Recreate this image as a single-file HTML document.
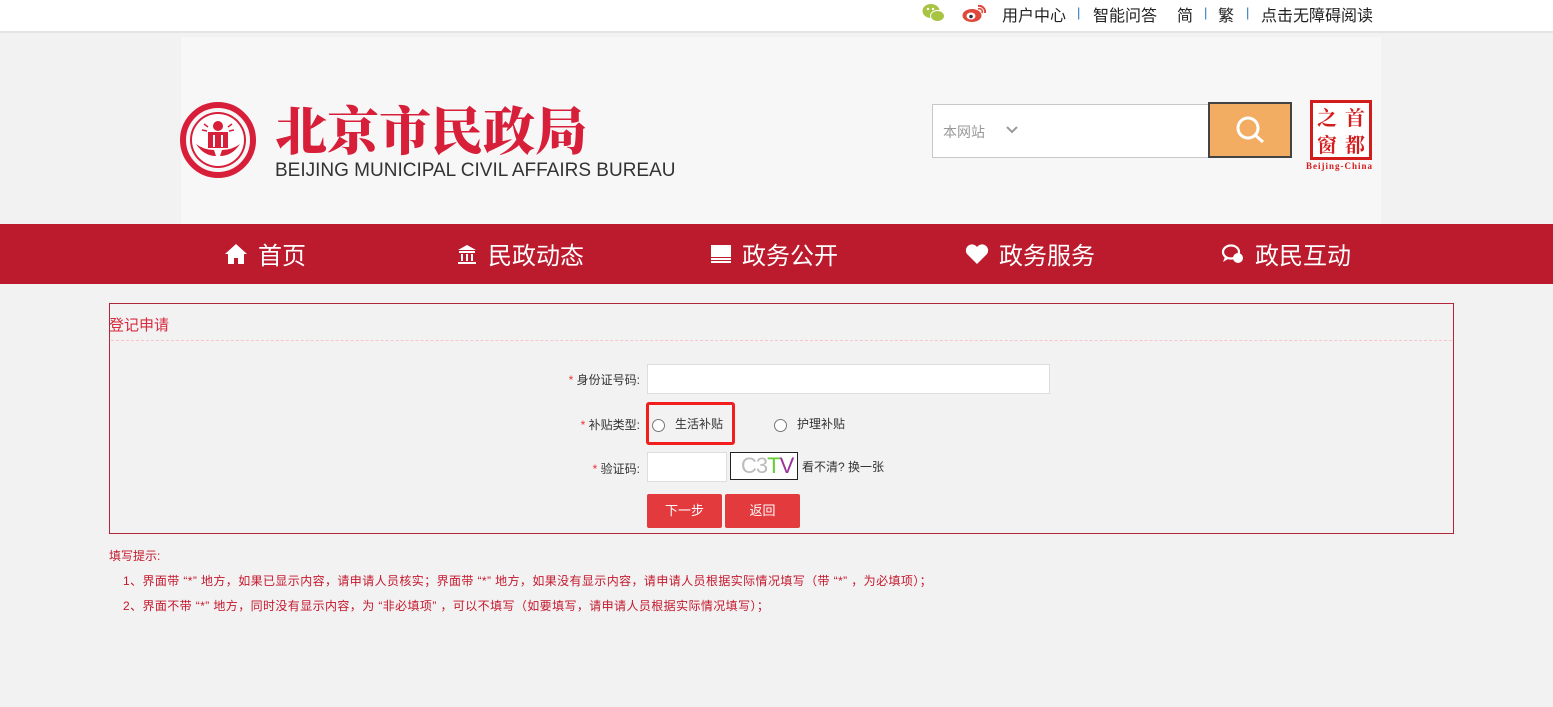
<!DOCTYPE html>
<html><head><meta charset="utf-8"><style>
*{margin:0;padding:0;box-sizing:border-box}
body{width:1553px;height:707px;background:#f2f2f2;font-family:"Liberation Sans","Noto Sans CJK SC",sans-serif;position:relative;overflow:hidden}
.abs{position:absolute}
.top{left:0;top:0;width:1553px;height:33px;background:#fff;border-bottom:2px solid #e4e4e4}
.top span{position:absolute;top:2px;font-size:16px;color:#222}
.sep{color:#2a7abf!important;font-size:13px!important;top:5px!important}
.hdr{left:181px;top:37px;width:1200px;height:187px;background:#f7f7f7}
.nav{left:0;top:224px;width:1553px;height:60px;background:#bc1a2d}
.nav .it{position:absolute;top:12px;color:#fff;font-size:24px;display:flex;align-items:center;gap:10px}
.box{left:109px;top:303px;width:1345px;height:231px;border:1px solid #b0273a}
.lbl{font-size:12px;color:#333;text-align:right}
.star{color:#e33}
.btn{background:#e33a3e;color:#fff;font-size:13px;text-align:center;line-height:34px;height:34px;border-radius:2px}
.tip{font-size:12px;color:#c4182d;letter-spacing:.4px}
</style></head><body>
<div class="abs top">
<svg class="abs" style="left:922px;top:3px" width="23" height="20" viewBox="0 0 23 20"><ellipse cx="9" cy="8" rx="8.5" ry="7" fill="#a8c443"/><ellipse cx="15.5" cy="13" rx="7" ry="5.5" fill="#a8c443" stroke="#fff" stroke-width="1"/><circle cx="6" cy="6" r="1.2" fill="#fff"/><circle cx="11" cy="6" r="1.2" fill="#fff"/></svg>
<svg class="abs" style="left:962px;top:3px" width="25" height="20" viewBox="0 0 25 20"><ellipse cx="10" cy="12.5" rx="9.5" ry="6.5" fill="#e0483e"/><ellipse cx="9" cy="13" rx="4.5" ry="3.5" fill="#fff"/><circle cx="9" cy="13.5" r="1.8" fill="#333"/><path d="M16 3a6 6 0 0 1 7 7" stroke="#e0483e" stroke-width="2" fill="none"/><path d="M16 6a3 3 0 0 1 4 4" stroke="#e0483e" stroke-width="1.6" fill="none"/></svg>
<span style="left:1002px">用户中心</span><span class="sep" style="left:1077px">|</span>
<span style="left:1093px">智能问答</span><span style="left:1177px">简</span><span class="sep" style="left:1204px">|</span>
<span style="left:1218px">繁</span><span class="sep" style="left:1246px">|</span><span style="left:1261px">点击无障碍阅读</span>
</div>
<div class="abs hdr"></div>
<svg class="abs" style="left:180px;top:102px" width="76" height="76" viewBox="0 0 76 76"><circle cx="38" cy="38" r="35" fill="none" stroke="#d81f3a" stroke-width="6"/><circle cx="38" cy="38" r="28" fill="#d81f3a"/><circle cx="38" cy="38" r="26" fill="#fff"/><circle cx="38" cy="24" r="5" fill="#d81f3a"/><rect x="28" y="30" width="20" height="16" fill="#d81f3a"/><rect x="33" y="33" width="2" height="12" fill="#fff"/><rect x="41" y="33" width="2" height="12" fill="#fff"/><path d="M16 42q8 12 20 12l-2-6q-10 0-18-6zM60 42q-8 12-20 12l2-6q10 0 18-6z" fill="#d81f3a"/><path d="M24 22l4 3M52 22l-4 3M22 28l5 1M54 28l-5 1" stroke="#d81f3a" stroke-width="1.5"/></svg>
<div class="abs" style="left:275px;top:98px;font-family:'Noto Serif CJK SC',serif;font-weight:900;font-size:52px;color:#d81f3a;line-height:60px">北京市民政局</div>
<div class="abs" style="left:275px;top:161px;font-size:19px;color:#333;line-height:20px">BEIJING MUNICIPAL CIVIL AFFAIRS BUREAU</div>
<div class="abs" style="left:932px;top:104px;width:277px;height:54px;background:#fff;border:1px solid #c8c8c8"></div>
<div class="abs" style="left:943px;top:122px;font-size:14px;color:#999">本网站</div>
<svg class="abs" style="left:1006px;top:126px" width="12" height="8"><path d="M1 1l5 5 5-5" stroke="#999" stroke-width="2" fill="none"/></svg>
<div class="abs" style="left:1208px;top:102px;width:84px;height:56px;background:#f2ad63;border:2px solid #444"></div>
<svg class="abs" style="left:1235px;top:115px" width="32" height="32"><circle cx="13" cy="13" r="10" stroke="#fff" stroke-width="3" fill="none"/><path d="M20 20l8 7" stroke="#fff" stroke-width="3"/></svg>
<div class="abs" style="left:1310px;top:100px;width:62px;height:60px;border:3px solid #d31d1d;background:#fff;font-family:'Noto Serif CJK SC',serif;color:#d31d1d;font-size:20px;font-weight:bold;line-height:27px;text-align:center"><div style="display:grid;grid-template-columns:1fr 1fr"><span>之</span><span>首</span><span>窗</span><span>都</span></div></div>
<div class="abs" style="left:1306px;top:161px;font-family:'Liberation Serif',serif;font-size:9px;font-weight:bold;color:#d31d1d;letter-spacing:1px">Beijing-China</div>
<div class="abs nav">
<div class="it" style="left:224px"><svg width="24" height="22" viewBox="0 0 24 22"><path d="M12 1L1 11h3v10h6v-6h4v6h6V11h3z" fill="#fff"/></svg>首页</div>
<div class="it" style="left:456px"><svg width="22" height="22" viewBox="0 0 22 22"><path d="M11 2L2 7h18zM3 8h16v2H3zM5 11h2v7H5zM10 11h2v7h-2zM15 11h2v7h-2zM2 19h18v2H2z" fill="#fff"/></svg>民政动态</div>
<div class="it" style="left:710px"><svg width="22" height="22" viewBox="0 0 22 22"><rect x="1" y="2" width="20" height="12" fill="#fff"/><rect x="1" y="15" width="20" height="2" fill="#fff"/><rect x="1" y="18" width="20" height="2" fill="#fff"/></svg>政务公开</div>
<div class="it" style="left:965px"><svg width="24" height="22" viewBox="0 0 24 22"><path d="M12 21L2 11A5.5 5.5 0 0 1 12 4a5.5 5.5 0 0 1 10 7z" fill="#fff"/></svg>政务服务</div>
<div class="it" style="left:1221px"><svg width="24" height="22" viewBox="0 0 24 22"><ellipse cx="10" cy="9" rx="8" ry="6.5" fill="none" stroke="#fff" stroke-width="2.2"/><circle cx="17" cy="15" r="5" fill="#fff"/><path d="M4 14l-2 5 5-3" fill="#fff"/></svg>政民互动</div>
</div>
<div class="abs box"></div>
<div class="abs" style="left:109px;top:314px;font-size:15px;color:#d82a3e">登记申请</div>
<div class="abs" style="left:111px;top:340px;width:1341px;border-top:1px dashed #f6c6cc"></div>
<div class="abs lbl" style="left:540px;top:371px;width:100px"><span class="star">* </span>身份证号码:</div>
<div class="abs" style="left:647px;top:364px;width:403px;height:30px;background:#fff;border:1px solid #ddd"></div>
<div class="abs lbl" style="left:540px;top:416px;width:100px"><span class="star">* </span>补贴类型:</div>
<div class="abs" style="left:646px;top:402px;width:89px;height:43px;border:3px solid #f21e1e;border-radius:3px"></div>
<div class="abs" style="left:652px;top:419px;width:13px;height:13px;border:1px solid #777;border-radius:50%;background:#fff"></div>
<div class="abs lbl" style="left:675px;top:415px;text-align:left">生活补贴</div>
<div class="abs" style="left:774px;top:419px;width:13px;height:13px;border:1px solid #777;border-radius:50%;background:#fff"></div>
<div class="abs lbl" style="left:797px;top:415px;text-align:left">护理补贴</div>
<div class="abs lbl" style="left:540px;top:460px;width:100px"><span class="star">* </span>验证码:</div>
<div class="abs" style="left:647px;top:452px;width:80px;height:30px;background:#fff;border:1px solid #ddd"></div>
<div class="abs" style="left:730px;top:452px;width:68px;height:28px;background:#fff;border:1px solid #222;font-size:22px;line-height:26px;padding-left:10px;color:#bbb;letter-spacing:-1px">C3<span style="color:#6c3">T</span><span style="color:#939">V</span></div>
<div class="abs lbl" style="left:802px;top:458px;text-align:left">看不清? 换一张</div>
<div class="abs btn" style="left:647px;top:494px;width:75px">下一步</div>
<div class="abs btn" style="left:725px;top:494px;width:75px">返回</div>
<div class="abs tip" style="left:109px;top:547px;letter-spacing:0">填写提示:</div>
<div class="abs tip" style="left:123px;top:572px">1、界面带 “*” 地方，如果已显示内容，请申请人员核实；界面带 “*” 地方，如果没有显示内容，请申请人员根据实际情况填写（带 “*” ，为必填项）；</div>
<div class="abs tip" style="left:123px;top:597px">2、界面不带 “*” 地方，同时没有显示内容，为 “非必填项” ，可以不填写（如要填写，请申请人员根据实际情况填写）；</div>
</body></html>
